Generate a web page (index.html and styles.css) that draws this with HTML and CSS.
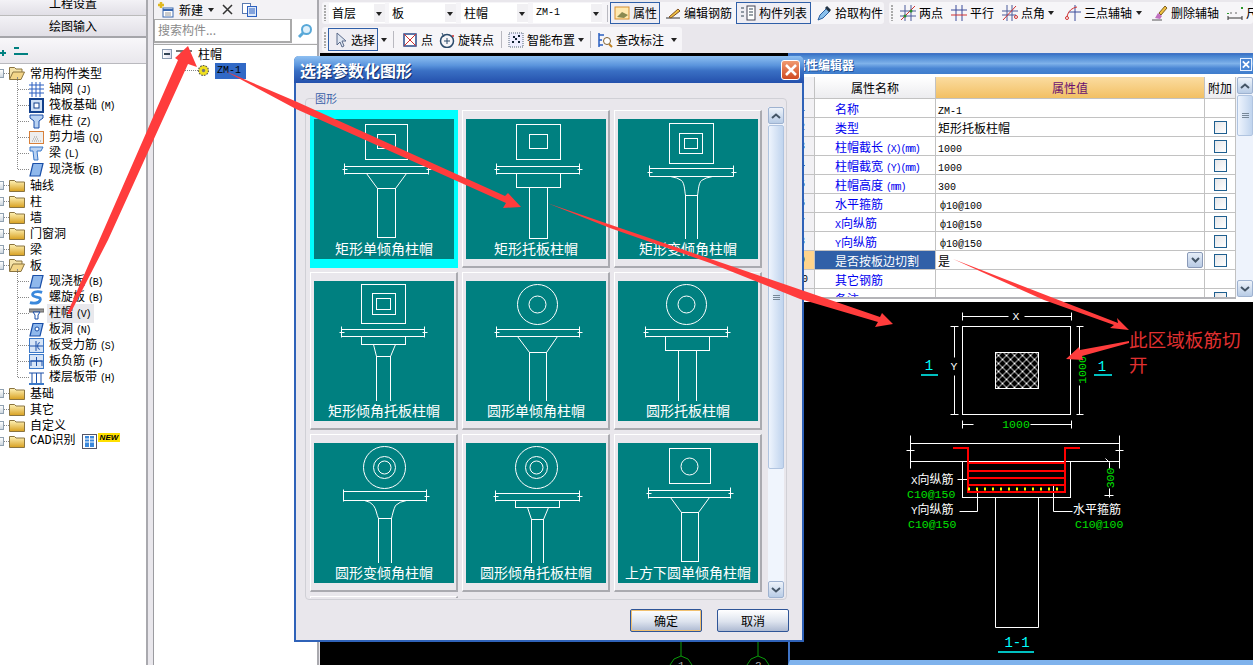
FILE: index.html
```html
<!DOCTYPE html>
<html lang="zh">
<head>
<meta charset="utf-8">
<title>选择参数化图形</title>
<link rel="stylesheet" href="styles.css">
</head>
<body>
<svg class="defs" width="0" height="0">
  <defs>
    <linearGradient id="fg" x1="0" y1="0" x2="0" y2="1"><stop offset="0" stop-color="#fff3b8"/><stop offset="1" stop-color="#d8a020"/></linearGradient>
    <symbol id="fc" viewBox="0 0 16 14"><path d="M.5 2.5h5l1.5 1.5h8.500v9.500H.5z" fill="url(#fg)" stroke="#8a7440"/></symbol>
    <symbol id="fo" viewBox="0 0 16 14"><path d="M.5 13V1.500h5L7 3h6v3" fill="#f4e2a8" stroke="#8a7440"/><path d="M.5 13.500 4 6h11.500l-3.500 7.500z" fill="#f3d588" stroke="#8a7440"/></symbol>
    <symbol id="slab" viewBox="0 0 15 15"><path d="M4 1.500h10l-3 12.500H1z" fill="#8fb8ec" stroke="#1a4fa8" stroke-width="1.200"/></symbol>
    <pattern id="hatch" width="8" height="8" patternUnits="userSpaceOnUse"><path d="M0 0l8 8M8 0L0 8" stroke="#fff" stroke-width="1" fill="none"/></pattern>
  </defs>
</svg>

<aside class="left">
  <div class="lbtn first">工程设置</div>
  <div class="lbtn">绘图输入</div>
  <div class="lbar">
    <svg class="lbar-ic" width="30" height="14" viewBox="0 0 30 14"><path d="M0 8h6M3 5v6M14 3h5M14 9h14" stroke="#008080" stroke-width="2" fill="none"/></svg>
  </div>
  <div class="tree">
    <div class="tn"><i class="ex"></i><i class="dots"></i><svg class="fold"><use href="#fo"/></svg><span>常用构件类型</span></div>
    <div class="kids">
      <div class="kn"><svg class="ki" viewBox="0 0 15 15"><path d="M0 3h15M0 7h15M0 11h15M3 0v15M7 0v15M11 0v15" stroke="#2a5fc0" fill="none"/></svg><span>轴网<b class="k">(J)</b></span></div>
      <div class="kn"><svg class="ki" viewBox="0 0 15 15"><rect x="1" y="1" width="13" height="13" fill="#cfe0f5" stroke="#12408c" stroke-width="2"/><rect x="5" y="5" width="5" height="5" fill="#fff" stroke="#12408c"/></svg><span>筏板基础<b class="k">(M)</b></span></div>
      <div class="kn"><svg class="ki" viewBox="0 0 15 15"><path d="M1 1h13v3l-4 3v7H5V7L1 4z" fill="#b9d2f2" stroke="#1a4fa8"/></svg><span>框柱<b class="k">(Z)</b></span></div>
      <div class="kn"><svg class="ki" viewBox="0 0 15 15"><rect x=".5" y="1.500" width="14" height="12" fill="#eee" stroke="#d8803a"/><path d="M3 11h9M4 9h6M5 7h3" stroke="#999" stroke-dasharray="1 1"/></svg><span>剪力墙<b class="k">(Q)</b></span></div>
      <div class="kn"><svg class="ki" viewBox="0 0 15 15"><path d="M1 1h13l-2 4H8l1 9H5L4 5H1z" fill="#b9d2f2" stroke="#3a78c8"/></svg><span>梁<b class="k">(L)</b></span></div>
      <div class="kn"><svg class="ki"><use href="#slab"/></svg><span>现浇板<b class="k">(B)</b></span></div>
    </div>
    <div class="tn"><i class="ex"></i><i class="dots"></i><svg class="fold"><use href="#fc"/></svg><span>轴线</span></div>
    <div class="tn"><i class="ex"></i><i class="dots"></i><svg class="fold"><use href="#fc"/></svg><span>柱</span></div>
    <div class="tn"><i class="ex"></i><i class="dots"></i><svg class="fold"><use href="#fc"/></svg><span>墙</span></div>
    <div class="tn"><i class="ex"></i><i class="dots"></i><svg class="fold"><use href="#fc"/></svg><span>门窗洞</span></div>
    <div class="tn"><i class="ex"></i><i class="dots"></i><svg class="fold"><use href="#fc"/></svg><span>梁</span></div>
    <div class="tn"><i class="ex"></i><i class="dots"></i><svg class="fold"><use href="#fo"/></svg><span>板</span></div>
    <div class="kids">
      <div class="kn"><svg class="ki"><use href="#slab"/></svg><span>现浇板<b class="k">(B)</b></span></div>
      <div class="kn"><svg class="ki" viewBox="0 0 16 15"><path d="M14 2C8 0 3 2 4 5s9 1 8 5-7 4-11 3" fill="none" stroke="#3a88dc" stroke-width="3"/></svg><span>螺旋板<b class="k">(B)</b></span></div>
      <div class="kn"><svg class="ki" viewBox="0 0 15 15"><path d="M0 3h15v3H0z" fill="#999" stroke="#666"/><path d="M4 6h7L9 9v4H6V9z" fill="#fff" stroke="#1a4fa8"/></svg><span class="hl">柱帽<b class="k">(V)</b></span></div>
      <div class="kn"><svg class="ki" viewBox="0 0 15 15"><path d="M4 1.500h10l-3 12.500H1z" fill="#8fb8ec" stroke="#1a4fa8" stroke-width="1.200"/><circle cx="8" cy="7" r="2" fill="#fff" stroke="#1a4fa8"/></svg><span>板洞<b class="k">(N)</b></span></div>
      <div class="kn"><svg class="ki" viewBox="0 0 15 15"><rect x=".5" y=".5" width="14" height="14" fill="#d6e4f6" stroke="#3a78c8"/><path d="M1 8h13M7 3v10M11 5c-3-2-3 8 0 6" stroke="#1a4fa8" fill="none"/></svg><span>板受力筋<b class="k">(S)</b></span></div>
      <div class="kn"><svg class="ki" viewBox="0 0 15 15"><rect x=".5" y=".5" width="14" height="14" fill="#d6e4f6" stroke="#3a78c8"/><path d="M2 12V7h11v5M1 7h13M7.500 3v9" stroke="#1a4fa8" fill="none"/></svg><span>板负筋<b class="k">(F)</b></span></div>
      <div class="kn"><svg class="ki" viewBox="0 0 15 15"><path d="M0 14h15M0 3h15M3 3v11M7.500 3v11M12 3v11" stroke="#1a4fa8" fill="none"/><path d="M0 13h15v2H0z" fill="#3a78c8"/></svg><span>楼层板带<b class="k">(H)</b></span></div>
    </div>
    <div class="tn"><i class="ex"></i><i class="dots"></i><svg class="fold"><use href="#fc"/></svg><span>基础</span></div>
    <div class="tn"><i class="ex"></i><i class="dots"></i><svg class="fold"><use href="#fc"/></svg><span>其它</span></div>
    <div class="tn"><i class="ex"></i><i class="dots"></i><svg class="fold"><use href="#fc"/></svg><span>自定义</span></div>
    <div class="tn"><i class="ex"></i><i class="dots"></i><svg class="fold"><use href="#fc"/></svg><span class="cad">CAD识别</span>
      <svg class="cadi" viewBox="0 0 15 15"><rect x=".5" y=".5" width="14" height="14" fill="#fff" stroke="#556"/><path d="M3 2h4v11H3zM8 2h4v11H8z" fill="#3a88dc"/><path d="M3 5h4M3 8h4M8 5h4M8 8h4" stroke="#fff"/></svg>
      <span class="new">NEW</span>
    </div>
  </div>
</aside>

<section class="list">
  <div class="lt-bar">
    <svg class="ic" viewBox="0 0 16 16"><path d="M3 0v6M0 3h6" stroke="#e0b820" stroke-width="2.500"/><rect x="5" y="6" width="10" height="9" fill="#fff" stroke="#3a68b0"/><path d="M5 8h10" stroke="#3a68b0" stroke-width="2"/><path d="M7 11h6M7 13h6" stroke="#999"/></svg>
    <span class="lt-new">新建</span><i class="caret"></i>
    <svg class="lt-x" viewBox="0 0 11 11"><path d="M1 1l9 9M10 1l-9 9" stroke="#333" stroke-width="1.500"/></svg>
    <svg class="lt-c" viewBox="0 0 15 14"><rect x=".5" y=".5" width="8" height="10" fill="#fff" stroke="#5a7ab0"/><rect x="5.500" y="3.500" width="9" height="10" fill="#dce8f8" stroke="#2a5fc0"/><path d="M7 6h6M7 8h6M7 10h6" stroke="#2a5fc0"/></svg>
  </div>
  <div class="search">
    <div class="s-in">搜索构件...</div>
    <div class="s-btn"><svg width="16" height="16" viewBox="0 0 16 16"><circle cx="9.500" cy="6.500" r="4.500" fill="#dff0fb" stroke="#58a8d8" stroke-width="2"/><path d="M6 10l-4 4" stroke="#58a8d8" stroke-width="3"/></svg></div>
  </div>
  <div class="tree2">
    <div class="t2r">
      <i class="ex2"></i>
      <svg class="t2i" viewBox="0 0 16 10"><path d="M0 1h16v2H0z" fill="#777"/><path d="M5 3h6v6H5z" fill="#fff" stroke="#777"/></svg>
      <span>柱帽</span>
    </div>
    <div class="t2c">
      <i class="dots2"></i>
      <svg class="gear" viewBox="0 0 10 10"><circle cx="5" cy="5" r="4.500" fill="#f0e020" stroke="#555" stroke-dasharray="1.500 1"/><circle cx="5" cy="5" r="1.500" fill="#777"/></svg>
      <span class="sel">ZM-1</span>
    </div>
  </div>
</section>

<main class="main">
  <div class="head">
    <div class="row r1">
      <div class="tbar">
        <i class="grip"></i>
        <div class="combo w56"><span>首层</span><i class="cz"></i></div>
        <div class="combo w67 ml4"><span>板</span><i class="cz"></i></div>
        <div class="combo w67 ml5"><span>柱帽</span><i class="cz"></i></div>
        <div class="combo w69 ml5"><span class="mono">ZM-1</span><i class="cz"></i></div>
        <i class="sep ml5"></i>
        <div class="tool on w50 ml2"><svg class="ic" viewBox="0 0 16 16"><rect x="1" y="2" width="14" height="12" fill="#ffe9b0" stroke="#d89030"/><path d="M3 12l5-5 6 3-4 3z" fill="#8a8a50"/></svg><span>属性</span></div>
        <div class="tool w69 ml4"><svg class="ic" viewBox="0 0 16 16"><path d="M1 13h14" stroke="#333"/><path d="M4 12l9-8 2 2-9 7z" fill="#f0c040" stroke="#805020"/></svg><span>编辑钢筋</span></div>
        <div class="tool on w75 ml3"><svg class="ic" viewBox="0 0 16 16"><rect x="7" y="1" width="8" height="14" fill="#fff" stroke="#445"/><path d="M9 4h4M9 7h4M9 10h4M1 3h3M1 7h3M1 11h3" stroke="#345"/></svg><span>构件列表</span></div>
        <div class="tool w68 ml4"><svg class="ic" viewBox="0 0 16 16"><path d="M2 15l2-5 7-7 3 3-7 7z" fill="#8ac0ec" stroke="#2a5fa0"/><path d="M10 2l4 4" stroke="#234" stroke-width="3"/></svg><span>拾取构件</span></div>
      </div>
      <div class="tbar ml5 grow">
        <i class="grip"></i>
        <div class="tool w43 ml3"><svg class="ic" viewBox="0 0 16 16"><path d="M5 0v16M11 0v16M0 6h16M0 11h16" stroke="#4a5a9a"/><path d="M1 15L15 1" stroke="#d03030"/><circle cx="5" cy="11" r="1.500" fill="#2a8a2a"/><circle cx="11" cy="6" r="1.500" fill="#2a8a2a"/></svg><span>两点</span></div>
        <div class="tool w44 ml8"><svg class="ic" viewBox="0 0 16 16"><path d="M5 0v16M11 0v16M0 5h16" stroke="#3a4a9a"/><path d="M0 10h16" stroke="#d03030"/></svg><span>平行</span></div>
        <div class="tool w54 ml7"><svg class="ic" viewBox="0 0 16 16"><path d="M5 0v16M10 0v16M0 6h16M0 10h14" stroke="#4a5a9a"/><path d="M1 15L14 1" stroke="#d03030"/><circle cx="14" cy="12" r="1.500" fill="none" stroke="#d03030"/></svg><span>点角</span><i class="caret end"></i></div>
        <div class="tool w82 ml9"><svg class="ic" viewBox="0 0 16 16"><path d="M10 0v16M4 7h12" stroke="#3a4a9a"/><path d="M2 12C3 6 7 3 12 2" stroke="#d03030" fill="none"/><circle cx="2" cy="13" r="1.500" fill="#fff" stroke="#d03030"/></svg><span>三点辅轴</span><i class="caret end"></i></div>
        <div class="tool w68 ml5"><svg class="ic" viewBox="0 0 16 16"><path d="M0 15h10" stroke="#555"/><path d="M3 13l3-5 4 3-2 3z" fill="#c070c0"/><path d="M7 8l6-7 2 2-6 7z" fill="#f0c040" stroke="#806020"/></svg><span>删除辅轴</span></div>
        <div class="tool ml7"><svg class="ic" viewBox="0 0 16 16"><path d="M1 11v4M15 11v4M1 13h14" stroke="#333"/><path d="M1 8v1M15 2v2" stroke="#2a9a2a" stroke-width="2"/><path d="M3 8h2M8 8h2" stroke="#666"/></svg><span>尺</span></div>
      </div>
    </div>
    <div class="row r2">
      <div class="tbar fit">
        <i class="grip w6"></i>
        <div class="tool on w50"><svg class="ic" viewBox="0 0 16 16"><path d="M5 1v12l3-3 2 5 2-1-2-5h4z" fill="#dfe6f2" stroke="#5a6a8a"/></svg><span>选择</span></div>
        <i class="caret c-sel"></i>
        <i class="sep ml6"></i>
        <div class="tool w30 ml7"><svg class="ic" viewBox="0 0 16 16"><rect x="2" y="2" width="12" height="12" fill="#fff" stroke="#2a4a8a" stroke-width="1.500"/><path d="M2 2l12 12M14 2L2 14" stroke="#d03030"/></svg><span>点</span></div>
        <div class="tool w55 ml7"><svg class="ic" viewBox="0 0 16 16"><circle cx="8" cy="9" r="6.500" fill="none" stroke="#2a4a6a" stroke-width="1.500"/><path d="M8 6v6M5 9h6" stroke="#2a4a6a"/><path d="M3 1l2 4" stroke="#2a4a6a"/><circle cx="14" cy="4" r="1" fill="#d03030"/></svg><span>旋转点</span></div>
        <i class="sep ml8"></i>
        <div class="tool w76 ml5"><svg class="ic" viewBox="0 0 16 16"><rect x="1" y="1" width="14" height="14" fill="#eef" stroke="#567" stroke-dasharray="1 1"/><path d="M5 5h2M10 4h2M4 10h2M10 10h2M7 7h2" stroke="#123" stroke-width="2"/></svg><span>智能布置</span><i class="caret end"></i></div>
        <i class="sep ml7"></i>
        <div class="tool w85 ml5"><svg class="ic" viewBox="0 0 16 16"><path d="M2 1v14M2 3h5M2 8h3M2 13h4" stroke="#2a5fc0" stroke-width="1.500"/><circle cx="10" cy="9" r="3.500" fill="#fff" stroke="#806030"/><path d="M12 12l3 3" stroke="#c08020" stroke-width="2"/></svg><span>查改标注</span><i class="caret end"></i></div>
      </div>
    </div>
  </div>
  <div class="cv">
    <svg class="axis a1" width="24" height="24" viewBox="0 0 24 24"><path d="M12 0v14" stroke="#0a9a0a"/><path d="M12 14l7 3 4 6v1H1v-1l4-6z" fill="none" stroke="#0a9a0a"/></svg>
    <span class="axn a1n">1</span>
    <svg class="axis a2" width="24" height="24" viewBox="0 0 24 24"><path d="M12 0v14" stroke="#0a9a0a"/><path d="M12 14l7 3 4 6v1H1v-1l4-6z" fill="none" stroke="#0a9a0a"/></svg>
    <span class="axn a2n">2</span>
  </div>
</main>

<section class="props">
  <div class="p-title"><span>属性编辑器</span><i class="p-close"><svg width="11" height="11" viewBox="0 0 11 11"><path d="M2 2l7 7M9 2L2 9" stroke="#fff" stroke-width="2"/></svg></i></div>
  <div class="p-wrap">
    <div class="p-table">
      <div class="pr ph"><div class="c0"></div><div class="c1">属性名称</div><div class="c2">属性值</div><div class="c3">附加</div></div>
      <div class="pr"><div class="c0">1</div><div class="c1 n">名称</div><div class="c2"><span class="mono">ZM-1</span></div><div class="c3"></div></div>
      <div class="pr"><div class="c0">2</div><div class="c1 n">类型</div><div class="c2">矩形托板柱帽</div><div class="c3"><i class="ck"></i></div></div>
      <div class="pr"><div class="c0">3</div><div class="c1 n">柱帽截长<b class="k">(X)(mm)</b></div><div class="c2"><span class="mono">1000</span></div><div class="c3"><i class="ck"></i></div></div>
      <div class="pr"><div class="c0">4</div><div class="c1 n">柱帽截宽<b class="k">(Y)(mm)</b></div><div class="c2"><span class="mono">1000</span></div><div class="c3"><i class="ck"></i></div></div>
      <div class="pr"><div class="c0">5</div><div class="c1 n">柱帽高度<b class="k">(mm)</b></div><div class="c2"><span class="mono">300</span></div><div class="c3"><i class="ck"></i></div></div>
      <div class="pr"><div class="c0">6</div><div class="c1 n">水平箍筋</div><div class="c2"><span class="mono rb">ф10@100</span></div><div class="c3"><i class="ck"></i></div></div>
      <div class="pr"><div class="c0">7</div><div class="c1 n"><span class="mono">X</span>向纵筋</div><div class="c2"><span class="mono rb">ф10@150</span></div><div class="c3"><i class="ck"></i></div></div>
      <div class="pr"><div class="c0">8</div><div class="c1 n"><span class="mono">Y</span>向纵筋</div><div class="c2"><span class="mono rb">ф10@150</span></div><div class="c3"><i class="ck"></i></div></div>
      <div class="pr psel"><div class="c0">9</div><div class="c1 n">是否按板边切割</div><div class="c2">是<i class="pdrop"><svg width="9" height="6" viewBox="0 0 9 6"><path d="M1 1l3.500 3.500L8 1" fill="none" stroke="#456" stroke-width="2"/></svg></i></div><div class="c3"><i class="ck"></i></div></div>
      <div class="pr"><div class="c0">10</div><div class="c1 n">其它钢筋</div><div class="c2"></div><div class="c3"></div></div>
      <div class="pr"><div class="c0">11</div><div class="c1 n">备注</div><div class="c2"></div><div class="c3"><i class="ck"></i></div></div>
    </div>
    <div class="p-sb">
      <div class="sb-b"><svg width="10" height="6" viewBox="0 0 10 6"><path d="M1 5l4-3.500L9 5" fill="none" stroke="#456" stroke-width="2"/></svg></div>
      <div class="sb-th p-th"><i></i></div>
      <div class="sb-tr"></div>
      <div class="sb-b"><svg width="10" height="6" viewBox="0 0 10 6"><path d="M1 1l4 3.500L9 1" fill="none" stroke="#456" stroke-width="2"/></svg></div>
    </div>
  </div>
  <div class="p-cad">
    <svg class="draw" width="363" height="358" viewBox="0 7 363 358">
      <g class="w" transform="translate(.5 .5)">
        <rect x="72" y="31" width="108" height="88"/>
        <rect x="105" y="57" width="43" height="36" fill="url(#hatch)"/>
        <path d="M72 17v8M181 17v8M72 21h46M134 21h47M72 125v8M181 125v8M72 129h11M140 129h41"/>
        <path d="M60 31h8M60 119h8M64 31v31M64 80v39M186 31h7M186 119h7M189 31v31M189 90v29"/>
        <path d="M20 140v33M229 140v33M20 148h209M20 166h209M16 155h8M225 155h8"/>
        <rect x="72" y="166" width="108" height="36"/>
        <path d="M105 202v130h43V202"/>
        <path d="M67 184h11M69 216h18v-22M163 190v26h19M215 163l4 4v6M219 193v9M214 200h9"/>
      </g>
      <g class="r">
        <path d="M63 153h15v44h97v-44h15"/>
        <path d="M78 168h97M78 176h97M78 183h97M78 190h97"/>
      </g>
      <path class="y" d="M78 194h94"/>
      <path class="cl" d="M31 80h17M204 80h18M108 357h36"/>
      <text class="tw" x="126" y="25" text-anchor="middle">X</text>
      <text class="tw" x="64" y="75" text-anchor="middle">Y</text>
      <text class="tg" x="126" y="133" text-anchor="middle">1000</text>
      <text class="tg" transform="translate(196 75) rotate(-90)" text-anchor="middle">1000</text>
      <text class="tc" x="39" y="75" text-anchor="middle">1</text>
      <text class="tc" x="212" y="76" text-anchor="middle">1</text>
      <text class="tl" x="21" y="189"><tspan class="mn">X</tspan>向纵筋</text>
      <text class="tg" x="17" y="203">C10@150</text>
      <text class="tl" x="21" y="219"><tspan class="mn">Y</tspan>向纵筋</text>
      <text class="tg" x="18" y="233">C10@150</text>
      <text class="tl" x="183" y="219">水平箍筋</text>
      <text class="tg" x="185" y="233">C10@100</text>
      <text class="tg" transform="translate(224 183) rotate(-90)" text-anchor="middle">300</text>
      <text class="tc" x="127" y="352" text-anchor="middle">1-1</text>
    </svg>
  </div>
</section>

<section class="dlg">
  <div class="d-title"><span>选择参数化图形</span><i class="d-close"><svg width="14" height="14" viewBox="0 0 14 14"><path d="M2 2l10 10M12 2L2 12" stroke="#fff" stroke-width="2.500"/></svg></i></div>
  <fieldset class="grp">
    <legend>图形</legend>
    <div class="g-in">
      <div class="cards">
        <div class="card cur"><div class="teal">
          <svg class="dg" viewBox="-.5 -.5 140 120"><rect x="51" y="5" width="42" height="35"/><rect x="63" y="15" width="18" height="14"/><path d="M28 50h5M112 50h5M30 47h84M30 54h84M30 44v11M114 44v11"/><path d="M52 54l11 15M92 54L81 69"/><rect x="63" y="69" width="18" height="49"/></svg>
          <div class="cap">矩形单倾角柱帽</div></div></div>
        <div class="card"><div class="teal">
          <svg class="dg" viewBox="-.5 -.5 140 120"><rect x="50" y="5" width="44" height="35"/><rect x="63" y="15" width="18" height="14"/><path d="M28 50h5M111 50h5M30 47h83M30 54h83M30 44v11M113 44v11"/><rect x="50" y="54" width="44" height="14"/><rect x="63" y="68" width="18" height="51"/></svg>
          <div class="cap">矩形托板柱帽</div></div></div>
        <div class="card"><div class="teal">
          <svg class="dg" viewBox="-.5 -.5 140 120"><rect x="51" y="4" width="44" height="40"/><rect x="61" y="14" width="23" height="20"/><rect x="66" y="19" width="13" height="10"/><path d="M29 53h5M113 53h5M31 49h84M31 57h84M31 46v11M115 46v11"/><path d="M52 57q7 1 11 4c3 3 3 9 4 15M94 57q-7 1-11 4c-3 3-3 9-4 15"/><rect x="67" y="76" width="12" height="45"/></svg>
          <div class="cap">矩形变倾角柱帽</div></div></div>

        <div class="card"><div class="teal">
          <svg class="dg" viewBox="-.5 -.5 140 120"><rect x="47" y="3" width="44" height="39"/><rect x="58" y="12" width="23" height="21"/><rect x="62" y="17" width="14" height="11"/><path d="M25 51h5M108 51h5M27 48h83M27 55h83M27 45v11M110 45v11"/><rect x="47" y="55" width="44" height="8"/><path d="M59 63l3 12M81 63l-5 12"/><rect x="62" y="75" width="14" height="45"/></svg>
          <div class="cap">矩形倾角托板柱帽</div></div></div>
        <div class="card"><div class="teal">
          <svg class="dg" viewBox="-.5 -.5 140 120"><circle cx="71" cy="23" r="20"/><circle cx="71" cy="23" r="8.500"/><path d="M28 51h5M111 51h5M30 48h83M30 55h83M30 45v11M113 45v11"/><path d="M51 55l12 16M91 55L80 71"/><rect x="63" y="71" width="17" height="49"/></svg>
          <div class="cap">圆形单倾角柱帽</div></div></div>
        <div class="card"><div class="teal">
          <svg class="dg" viewBox="-.5 -.5 140 120"><circle cx="68" cy="23" r="20"/><circle cx="68" cy="23" r="8.500"/><path d="M25 51h5M107 51h5M27 48h82M27 55h82M27 45v11M109 45v11"/><rect x="47" y="55" width="44" height="14"/><rect x="60" y="69" width="18" height="51"/></svg>
          <div class="cap">圆形托板柱帽</div></div></div>

        <div class="card"><div class="teal">
          <svg class="dg" viewBox="-.5 -.5 140 120"><circle cx="70" cy="24" r="21"/><circle cx="70" cy="24" r="11"/><circle cx="70" cy="24" r="6.500"/><path d="M110 53h5M29 48h83M29 57h83M29 46v12M112 46v12"/><path d="M50 57q6 1 9 5c3 4 3 9 5 13M92 57q-7 1-11 5c-2 4-3 9-4 13"/><rect x="64" y="75" width="13" height="46"/></svg>
          <div class="cap">圆形变倾角柱帽</div></div></div>
        <div class="card"><div class="teal">
          <svg class="dg" viewBox="-.5 -.5 140 120"><circle cx="70" cy="24" r="21"/><circle cx="70" cy="24" r="11"/><circle cx="70" cy="24" r="6.500"/><path d="M27 53h5M111 53h5M29 50h84M29 57h84M29 47v11M113 47v11"/><rect x="49" y="57" width="44" height="7"/><path d="M61 64l4 12M82 64l-5 12"/><rect x="65" y="76" width="12" height="46"/></svg>
          <div class="cap">圆形倾角托板柱帽</div></div></div>
        <div class="card"><div class="teal">
          <svg class="dg" viewBox="-.5 -.5 140 120"><rect x="51" y="5" width="41" height="35"/><circle cx="71" cy="23" r="8.500"/><path d="M28 50h5M110 50h5M30 47h82M30 54h82M30 44v11M112 44v11"/><path d="M52 54l11 15M91 54L80 69"/><rect x="63" y="69" width="17" height="49"/></svg>
          <div class="cap">上方下圆单倾角柱帽</div></div></div>

        <div class="card"></div>
      </div>
      <div class="d-sb">
        <div class="sb-b"><svg width="10" height="6" viewBox="0 0 10 6"><path d="M1 5l4-3.500L9 5" fill="none" stroke="#456" stroke-width="2"/></svg></div>
        <div class="sb-th d-th"><i></i></div>
        <div class="sb-tr"></div>
        <div class="sb-b"><svg width="10" height="6" viewBox="0 0 10 6"><path d="M1 1l4 3.500L9 1" fill="none" stroke="#456" stroke-width="2"/></svg></div>
      </div>
    </div>
  </fieldset>
  <div class="d-btns">
    <div class="btn def">确定</div>
    <div class="btn">取消</div>
  </div>
</section>

<svg class="arrows" width="1253" height="665" viewBox="0 0 1253 665">
  <path d="M67 314L178 60l-3-2 13-12 9 21-9-3-80 176-38 74z"/>
  <path d="M225 71L295 101 505 196 508 193 521 207 503 208 506 203 296 109z"/>
  <path d="M547 203L880 317 882 313 893 324 875 327 878 322 800 299 710 263 610 228z"/>
  <path d="M953 259L1118 323 1117 318 1129 330 1110 328 1114 325 1044 300z"/>
  <path d="M1129 341l-49 9-1-3-13 12 17 1-1-4 47-13z"/>
</svg>
<div class="note">此区域板筋切开</div>
</body>
</html>
```
FILE: styles.css
```css
* { box-sizing: border-box; }
html, body { margin: 0; padding: 0; }
body {
  position: relative;
  width: 1253px;
  height: 665px;
  overflow: hidden;
  display: flex;
  background: #e9e7ec;
  font: 12px/16px "Noto Sans CJK SC", "Liberation Sans", sans-serif;
  color: #000;
}
i { font-style: normal; display: block; flex: none; }
b { font-weight: normal; }
.defs { position: absolute; }
.mono, .mn { font-family: "Liberation Mono", monospace; font-size: 10px; }
.k { font-family: "Liberation Mono", monospace; font-size: 10px; letter-spacing: -1.2px; margin-left: 3px; }

/* left navigation */
.left { width: 148px; flex: none; display: flex; flex-direction: column; border-right: 2px solid #a9a9ae; }
.lbtn { height: 22px; line-height: 20px; text-align: center; background: linear-gradient(#f3f2f6, #e1dfe6); border-bottom: 2px solid #a5a5aa; }
.lbtn.first { height: 16px; line-height: 6px; border-bottom: 1px solid #bbb; }
.lbar { height: 26px; background: linear-gradient(#f8f7fa, #e9e7ec); border-bottom: 1px solid #b9b9be; display: flex; align-items: center; }
.lbar-ic { margin-top: 2px; }
.tree { flex: 1; background: #fff; padding-top: 1px; overflow: hidden; }
.tn { height: 16px; display: flex; align-items: center; }
.ex { width: 9px; height: 9px; margin-left: -5px; border: 1px solid #8fa0b0; background: linear-gradient(#fff, #cfd8e0); }
.dots { width: 5px; border-top: 1px dotted #888; }
.fold { width: 16px; height: 14px; margin-right: 5px; flex: none; }
.kids { position: relative; }
.kids::before { content: ""; position: absolute; left: 17px; top: -4px; bottom: 8px; border-left: 1px dotted #888; }
.kn { height: 16px; display: flex; align-items: center; padding-left: 29px; position: relative; }
.kn::before { content: ""; position: absolute; left: 18px; top: 8px; width: 11px; border-top: 1px dotted #888; }
.ki { width: 15px; height: 15px; margin-right: 5px; flex: none; }
.hl { background: #e8e8ec; padding: 0 4px 0 2px; margin-left: -2px; }
.cad { font-family: "Liberation Mono", "Noto Sans CJK SC", monospace; }
.cadi { width: 15px; height: 15px; margin-left: 6px; flex: none; }
.new { font: italic bold 8px/9px "Liberation Sans", sans-serif; background: #ffe000; padding: 0 2px; margin: -7px 0 0 1px; }

/* component list */
.list { width: 166px; flex: none; margin-left: 5px; display: flex; flex-direction: column; border-left: 1px solid #9b9ba0; border-right: 2px solid #a9a9ae; }
.lt-bar { height: 19px; display: flex; align-items: center; padding-left: 4px; background: #f3f2f5; }
.ic { width: 16px; height: 16px; flex: none; }
.lt-new { margin-left: 5px; }
.lt-x { width: 11px; height: 11px; margin-left: 8px; }
.lt-c { width: 15px; height: 14px; margin-left: 9px; }
.caret { width: 0; height: 0; border: 3px solid transparent; border-top: 4px solid #222; border-bottom: 0; margin-left: 5px; }
.caret.end { margin-left: auto; margin-right: 3px; }
.search { height: 25px; display: flex; background: #f3f2f5; }
.s-in { width: 138px; height: 24px; background: #fff; border: 1px solid #aaa; border-right-width: 2px; border-bottom-width: 2px; padding: 2px 3px; color: #8a8a8a; font-size: 12px; }
.s-btn { width: 25px; height: 24px; background: #fff; display: flex; align-items: center; justify-content: center; }
.tree2 { flex: 1; background: #fff; border-top: 1px solid #aaa; padding-top: 1px; }
.t2r { height: 16px; display: flex; align-items: center; padding-left: 8px; }
.ex2 { width: 10px; height: 10px; border: 1px solid #8a9ab0; background: linear-gradient(90deg, #fff, #dde); position: relative; }
.ex2::after { content: ""; position: absolute; left: 1px; right: 1px; top: 3px; border-top: 2px solid #345; }
.t2i { width: 16px; height: 10px; margin: 0 6px 0 4px; flex: none; }
.t2c { height: 17px; display: flex; align-items: center; padding-left: 31px; }
.dots2 { width: 13px; border-top: 1px dotted #888; }
.gear { width: 11px; height: 11px; flex: none; }
.sel { background: #3169c6; width: 31px; margin-left: 6px; height: 16px; line-height: 16px; padding-left: 2px; font-family: "Liberation Mono", monospace; font-size: 10px; }

/* main area and toolbars */
.main { flex: 1; margin-left: 1px; display: flex; flex-direction: column; min-width: 0; }
.head { height: 53px; flex: none; padding-left: 2px; overflow: hidden; }
.row { display: flex; }
.r1 { margin-top: 2px; height: 22px; }
.r2 { margin-top: 3px; height: 25px; }
.tbar { display: flex; align-items: center; background: #f6f5f8; border-radius: 3px; padding-right: 1px; }
.fit { width: 360px; }
.grow { flex: 1; min-width: 0; overflow: hidden; }
.grip { width: 7px; height: 16px; background: radial-gradient(circle at 3px 1px, #aaa 1px, transparent 1.2px) 0 0 / 7px 3px; }
.grip.w6 { width: 6px; }
.sep { width: 1px; height: 17px; background: #b9b9c0; }
.combo { height: 20px; background: #fff; display: flex; align-items: center; justify-content: space-between; padding-left: 3px; }
.cz { width: 11px; height: 18px; background: #f1f0f3; position: relative; }
.cz::after { content: ""; position: absolute; left: 2px; top: 8px; border: 3px solid transparent; border-top: 4px solid #222; border-bottom: 0; }
.tool { height: 21px; display: flex; align-items: center; gap: 3px; border: 1px solid transparent; flex: none; white-space: nowrap; }
.tool.on { border-color: #2f5fa8; background: #efeef4; height: 22px; padding-left: 3px; }
.r2 .tool.on { height: 23px; }
.c-sel { margin-left: 3px; }
.w30 { width: 30px; } .w43 { width: 43px; } .w44 { width: 44px; } .w50 { width: 50px; } .w54 { width: 54px; }
.w55 { width: 55px; } .w56 { width: 56px; } .w67 { width: 67px; } .w68 { width: 68px; } .w69 { width: 69px; }
.w75 { width: 75px; } .w76 { width: 76px; } .w82 { width: 82px; } .w85 { width: 85px; }
.ml2 { margin-left: 2px; } .ml3 { margin-left: 3px; } .ml4 { margin-left: 4px; } .ml5 { margin-left: 5px; }
.ml6 { margin-left: 6px; } .ml7 { margin-left: 7px; } .ml8 { margin-left: 8px; } .ml9 { margin-left: 9px; }
.cv { flex: 1; background: #000; position: relative; overflow: hidden; }
.axis { position: absolute; top: 589px; }
.a1 { left: 349px; } .a2 { left: 426px; }
.axn { position: absolute; top: 606px; color: #aaa; font: 11px/14px "Liberation Mono", monospace; }
.a1n { left: 358px; } .a2n { left: 435px; }

/* floating property window */
.props { position: absolute; left: 788px; top: 53px; right: 0; bottom: 0; display: flex; flex-direction: column; background: #fff; border-top: 2px solid #3f74c6; border-left: 2px solid #3f74c6; border-bottom: 5px solid #7fb2ec; }
.p-title { height: 19px; flex: none; display: flex; align-items: center; justify-content: space-between; padding: 0 1px 0 4px; color: #fff; font-weight: bold; background: linear-gradient(#3f7dcc, #7fb2ea 45%, #4a86d4 70%, #3f7dcc); text-shadow: 1px 1px 0 #24559e; }
.p-close { width: 12px; height: 13px; background: #4a86d4; border: 1px solid #e8f0ff; display: flex; align-items: center; justify-content: center; }
.p-wrap { height: 228px; flex: none; display: flex; padding-top: 3px; overflow: hidden; }
.p-table { width: 446px; height: 222px; overflow: hidden; flex: none; border-bottom: 2px solid #b4b4b8; }
.pr { display: grid; grid-template-columns: 25px 121px 269px 31px; height: 19px; border-bottom: 1px solid #c2c2c2; line-height: 20px; }
.pr > div { border-right: 1px solid #c2c2c2; overflow: hidden; white-space: nowrap; }
.ph { height: 22px; line-height: 21px; text-align: center; background: linear-gradient(#fff, #ececef); }
.ph .c2 { background: linear-gradient(#fbdca0, #f2c064); color: #6a1070; }
.c0 { text-align: center; font-family: "Liberation Mono", monospace; font-size: 10px; background: #f2f1f4; }
.ph .c0 { background: #f2f1f4; }
.c1.n { padding-left: 20px; color: #0000f0; }
.ph .c1 { text-align: center; }
.c2 { padding-left: 2px; position: relative; }
.ph .c2 { padding-left: 0; }
.rb { margin-left: 2px; }
.c3 { display: flex; justify-content: center; align-items: center; }
.ph .c3 { display: block; }
.ck { width: 13px; height: 13px; margin-top: 1px; border: 1px solid #1f5f8f; background: linear-gradient(135deg, #e6e6e8, #fff); }
.psel .c0 { background: #ffd48c; }
.psel .c1.n { background: #3060a8; color: #fff; }
.pdrop { position: absolute; right: 1px; top: 1px; width: 16px; height: 16px; background: linear-gradient(#e6eef8, #b8cae4); border: 1px solid #8a9ab8; border-radius: 2px; display: flex; align-items: center; justify-content: center; }
.p-sb { width: 17px; height: 220px; flex: none; display: flex; flex-direction: column; padding-left: 1px; background: #eef3fc; }
.d-sb { width: 16px; height: 491px; margin-top: -3px; display: flex; flex-direction: column; background: #f0f5fd; flex: none; }
.sb-b { height: 17px; flex: none; display: flex; align-items: center; justify-content: center; background: linear-gradient(#eef3fa, #b8cce6); border: 1px solid #9eb2d0; border-radius: 2px; }
.sb-th { flex: none; margin-top: 1px; background: linear-gradient(90deg, #eef4fd, #c0d4ee); border: 1px solid #b0c4e0; border-radius: 2px; display: flex; align-items: center; justify-content: center; }
.sb-th i { width: 7px; height: 5px; background: repeating-linear-gradient(#789 0 1px, transparent 1px 2px); }
.p-th { height: 41px; }
.d-th { height: 344px; }
.sb-tr { flex: 1; }
.p-cad { flex: 1; background: #000; overflow: hidden; }
.draw { display: block; margin-left: 100px; }
.w { fill: none; stroke: #fff; stroke-width: 1; }
.r { fill: none; stroke: #ff0000; stroke-width: 2; }
.y { fill: none; stroke: #ffff00; stroke-width: 3; stroke-dasharray: 2 6; }
.cl { fill: none; stroke: #00ffff; stroke-width: 1.5; }
.draw text { font: 11.5px "Liberation Mono", monospace; }
.tw, .tl { fill: #fff; }
.tg { fill: #00e000; }
.draw .tc { fill: #00ffff; font-size: 14px; }
.draw .tl { font: 12px "Noto Sans CJK SC", sans-serif; }
.draw .tl .mn { font-family: "Liberation Mono", monospace; font-size: 11px; }

/* parametric shape dialog */
.dlg { position: absolute; left: 294px; top: 56px; width: 510px; height: 586px; background: #e9e7ec; border: 2px solid #2f62b8; border-top: 0; border-radius: 5px 5px 0 0; display: flex; flex-direction: column; }
.d-title { height: 27px; flex: none; margin: 0 -2px; padding: 0 4px 0 6px; display: flex; align-items: center; justify-content: space-between; border-radius: 5px 5px 0 0; background: linear-gradient(#8ec0f2, #5a94dc 35%, #3a70c4 55%, #2450ac); color: #fff; font-size: 16px; font-weight: bold; text-shadow: 1px 1px 0 #10306e; }
.d-close { width: 19px; height: 20px; background: linear-gradient(#f09a70, #d04a22); border: 1px solid #fff; border-radius: 3px; display: flex; align-items: center; justify-content: center; }
.grp { margin: 8px 0 0 9px; padding: 0 1px 0 4px; width: 482px; height: 509px; border: 1px solid #d0d0d6; border-radius: 4px; min-width: 0; }
.grp legend { margin-left: 5px; padding: 0; color: #3a5fa8; font-size: 11px; line-height: 14px; }
.g-in { display: flex; height: 488px; margin-top: 5px; }
.cards { width: 458px; height: 488px; overflow: hidden; display: grid; grid-template-columns: repeat(3, 148px); grid-auto-rows: 158px; gap: 4px; flex: none; }
.card { padding: 8px 3px 0 3px; background: #e9e7ec; border: 1px solid #fff; border-right: 2px solid #aaaab0; border-bottom: 2px solid #aaaab0; }
.cur { background: #00ffff; border-color: #00ffff; }
.teal { width: 140px; height: 140px; background: #008080; }
.dg { display: block; width: 140px; height: 120px; fill: none; stroke: #fff; stroke-width: 1; }
.cap { height: 20px; margin-top: -1px; line-height: 20px; text-align: center; color: #fff; font-size: 14px; white-space: nowrap; }
.d-btns { display: flex; justify-content: flex-end; gap: 15px; padding-right: 13px; margin-top: 9px; }
.btn { width: 72px; height: 23px; line-height: 21px; text-align: center; background: linear-gradient(#fff, #dde3ee 55%, #aebad2); border: 1px solid #2f5597; border-radius: 2px; }
.btn.def { box-shadow: inset 0 0 0 1px #f0c070; }

/* annotation overlay */
.arrows { position: absolute; left: 0; top: 0; fill: #ff3c3c; }
.note { position: absolute; left: 1129px; top: 326px; width: 118px; color: #e03030; font-size: 18.6px; line-height: 25px; }
```
